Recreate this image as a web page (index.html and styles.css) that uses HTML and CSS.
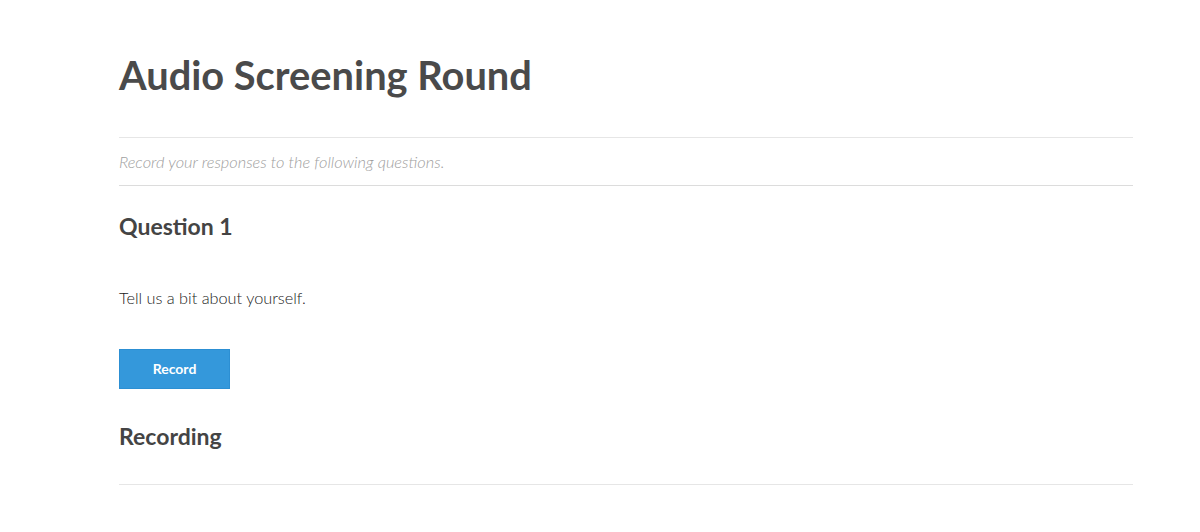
FILE: index.html
```html
<!DOCTYPE html>
<html lang="en">
<head>
    <meta charset="UTF-8" />
    <title>Audio Screening Round</title>
    <link rel="stylesheet" href="styles.css">
</head>
<body>
<div class="page">
    <h1 class="title">Audio Screening Round</h1>
    <div class="intro">Record your responses to the following questions.</div>
    <div class="question">
        <h2 class="question-title">Question 1</h2>
        <p class="question-text">Tell us a bit about yourself.</p>
        <div class="record-btn">Record</div>
        <h2 class="recording-title">Recording</h2>
    </div>
</div>
</body>
</html>
```

FILE: styles.css
```css
* {
    margin: 0;
    padding: 0;
    box-sizing: border-box;
}
html, body {
    background: #fff;
    font-family: Lato, "Open Sans", sans-serif;
    color: #4a4a4a;
}
.page {
    width: 1014px;
    margin-left: 119px;
    padding-top: 51px;
}
.title {
    font-size: 39.8px;
    font-weight: 700;
    line-height: 48px;
    color: #4a4a4a;
    padding-bottom: 38px;
    border-bottom: 1px solid #e6e6e6;
}
.intro {
    font-size: 16.4px;
    font-style: italic;
    font-weight: 300;
    color: #a0a0a0;
    line-height: 20px;
    padding: 14px 0 13px;
    border-bottom: 1px solid #dcdcdc;
}
.question {
    padding-top: 27px;
    padding-bottom: 35px;
    border-bottom: 1px solid #e6e6e6;
}
.question-title, .recording-title {
    font-size: 23px;
    font-weight: 700;
    line-height: 26px;
    color: #444;
}
.question-text {
    font-size: 16.3px;
    font-weight: 300;
    line-height: 20px;
    color: #222;
    margin-top: 49px;
}
.record-btn {
    width: 111px;
    height: 40px;
    margin-top: 41px;
    background-color: #3498db;
    border: 1px solid #2c8fd3;
    color: #fff;
    font-size: 14px;
    font-weight: 700;
    line-height: 38px;
    text-align: center;
    cursor: pointer;
}
.recording-title {
    margin-top: 34px;
}
```
